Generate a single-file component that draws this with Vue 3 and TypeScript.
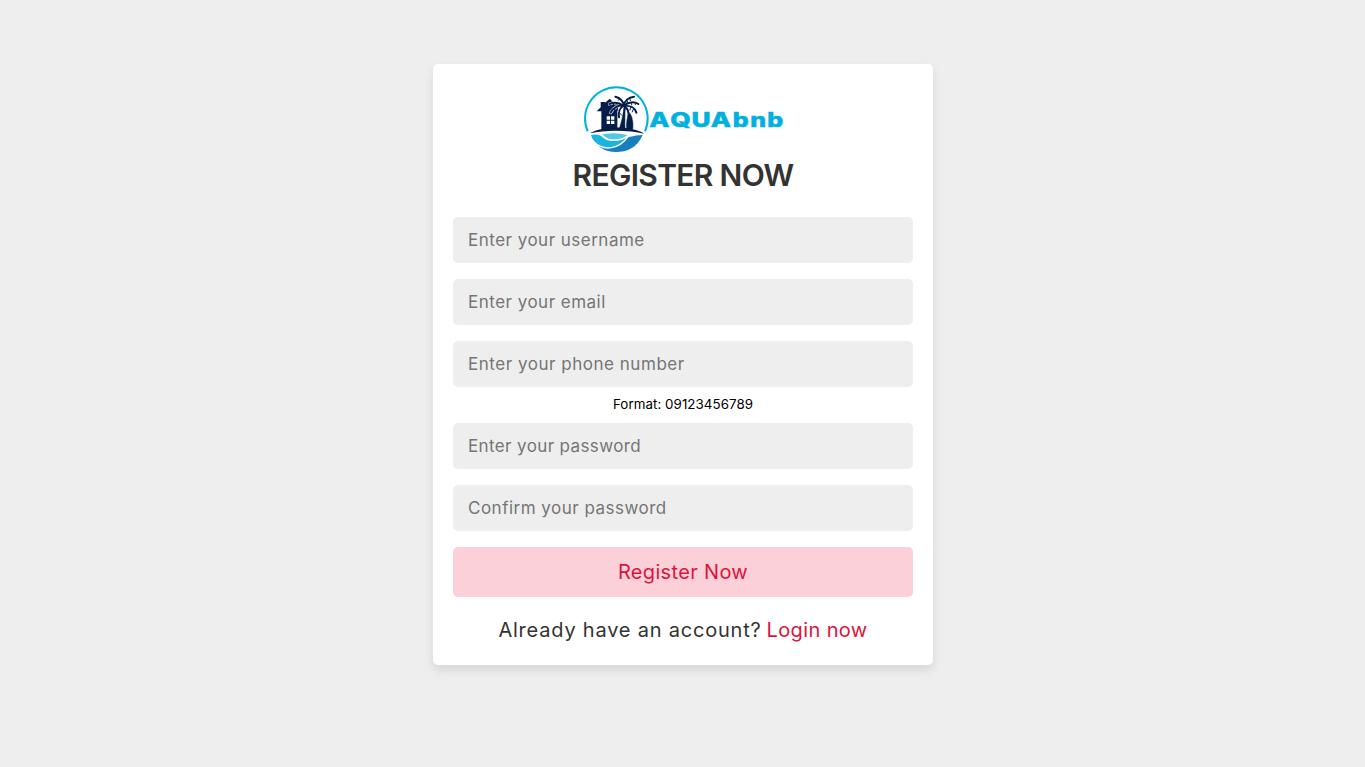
<script setup lang="ts">
import { reactive } from 'vue'

interface Field {
  key: string
  type: string
  placeholder: string
  hint?: string
}

const fields: Field[] = [
  { key: 'username', type: 'text', placeholder: 'Enter your username' },
  { key: 'email', type: 'email', placeholder: 'Enter your email' },
  { key: 'phone', type: 'tel', placeholder: 'Enter your phone number', hint: 'Format: 09123456789' },
  { key: 'password', type: 'password', placeholder: 'Enter your password' },
  { key: 'confirm', type: 'password', placeholder: 'Confirm your password' },
]

const values = reactive<Record<string, string>>({
  username: '',
  email: '',
  phone: '',
  password: '',
  confirm: '',
})
</script>

<template>
  <main class="page">
    <form class="card" @submit.prevent>
      <svg class="logo" viewBox="0 0 200 76" role="img" aria-label="AQUAbnb">
        <g transform="translate(-5.3 -4) scale(.33333)">
          <!-- ring -->
          <path d="M30 154A94 94 0 1 1 202 154" fill="none" stroke="#00b0e0" stroke-width="6" />
          <!-- house -->
          <path d="M57 94L69 82V66H82V68L96 56L119 78V149H71V94Z" fill="#061d49" />
          <path d="M87 109h10v10H87zM100 109h10v10h-10zM87 122h10v10H87zM100 122h10v10h-10z" fill="#fff" />
          <!-- palm and boards -->
          <g stroke="#fff" stroke-width="1.5" fill="#061d49">
            <path d="M137 78C136 105 129 127 122 151H144C142 120 144 98 144 78Z" />
            <path d="M156 97C146 109 143 132 146 150H166C169 132 166 109 156 97Z" />
          </g>
          <g fill="none" stroke="#fff" stroke-width="9" stroke-linecap="round">
            <path d="M137 77C124 75 106 82 99 98" />
            <path d="M137 77C122 66 108 66 95 72" />
          </g>
          <g fill="none" stroke="#061d49" stroke-width="6" stroke-linecap="round">
            <path d="M139 77C136 62 125 53 113 50" />
            <path d="M139 77C140 62 153 52 169 50" />
            <path d="M139 77C151 66 169 64 182 72" />
            <path d="M139 77C156 76 172 83 176 98" />
            <path d="M139 77C149 84 154 98 152 111" />
            <path d="M137 77C127 84 121 98 124 112" />
            <path d="M137 77C124 75 106 82 99 98" />
            <path d="M137 77C122 66 108 66 95 72" />
          </g>
          <g fill="none" stroke="#061d49" stroke-width="3">
            <path d="M150 61L148 69M157 56L158 63M162 67L162 76M172 67L173 75M160 80L156 91M168 86L163 97M120 82L120 92M110 86L110 98M119 68L117 76M108 69L107 76M126 56L121 62M143 83L138 104M125 98L133 107" />
          </g>
          <!-- shore and sea -->
          <path d="M36 160C76 138 155 136 200 161C155 150 84 149 36 160Z" fill="#061d49" />
          <path d="M40 166C58 159 71 159 91 168C135 188 153 165 195 165C178 205 145 216 116 216C80 216 54 200 40 166Z" fill="#167fbd" />
          <path d="M37 163C56 159 69 161 77 171C94 187 128 182 151 170C126 207 78 215 50 187C44 181 40 174 37 163Z" fill="#19b4df" stroke="#fff" stroke-width="4" />
          <path d="M65 162C97 155 129 157 153 164C134 184 94 184 80 171C76 166 72 164 65 162Z" fill="#50c9e9" stroke="#fff" stroke-width="4" />
        </g>
        <text class="wordmark" y="43.2" transform="scale(1.28 1)">
          <tspan x="51.8 68.2 84.7 99.8">AQUA</tspan><tspan class="lower" x="116.9 130.6 143.9">bnb</tspan>
        </text>
      </svg>
      <h1 class="title">REGISTER NOW</h1>
      <div v-for="field in fields" :key="field.key" class="field">
        <input
          v-model="values[field.key]"
          class="input"
          :class="field.key"
          :type="field.type"
          :placeholder="field.placeholder"
        />
        <small v-if="field.hint" class="hint">{{ field.hint }}</small>
      </div>
      <button class="submit" type="submit">Register Now</button>
      <p class="footer"><span class="question">Already have an account?</span><a class="login" href="#">Login now</a></p>
    </form>
  </main>
</template>

<style>
body {
  margin: 0;
  background: #eee;
}
</style>

<style scoped>
.page {
  box-sizing: border-box;
  min-height: 767px;
  padding-top: 64px;
  background: #eee;
  font-family: Inter, "Open Sans", sans-serif;
}
.card {
  box-sizing: border-box;
  display: flex;
  flex-direction: column;
  width: 500px;
  height: 601px;
  margin-left: 433px;
  padding: 20px;
  border-radius: 5px;
  background: #fff;
  box-shadow: 0 5px 10px rgba(0, 0, 0, .1);
}
.logo {
  flex: none;
  align-self: center;
  width: 200px;
  height: 76px;
  margin-bottom: -7px;
  overflow: visible;
}
.wordmark {
  fill: #00b0e0;
  stroke: #00b0e0;
  stroke-width: .5px;
  font-size: 20.5px;
  font-weight: 800;
}
.lower {
  font-size: 19.5px;
}
.title {
  height: 45px;
  margin: 0 0 19px;
  color: #333;
  font-size: 30px;
  font-weight: 600;
  letter-spacing: -.68px;
  line-height: 45px;
  text-align: center;
  white-space: nowrap;
}
.field {
  display: flex;
  flex-direction: column;
  margin-bottom: 16px;
}
.field:has(.hint) {
  margin-bottom: 6px;
}
.input {
  box-sizing: border-box;
  width: 100%;
  height: 46px;
  padding: 0 15px;
  border: 0;
  border-radius: 5px;
  outline: 0;
  background: #eee;
  color: #333;
  font-family: inherit;
  font-size: 17px;
  font-weight: 400;
  letter-spacing: .49px;
}
.input.phone {
  letter-spacing: .53px;
}
.input.password {
  letter-spacing: .38px;
}
.input::placeholder {
  color: #757575;
  opacity: 1;
}
.hint {
  height: 20px;
  margin-top: 7px;
  margin-bottom: 3px;
  color: #000;
  font-size: 13.33px;
  letter-spacing: .06px;
  line-height: 20px;
  text-align: center;
}
.submit {
  flex: none;
  height: 50px;
  padding: 0;
  border: 0;
  border-radius: 5px;
  background: #fbd0d9;
  color: crimson;
  font-family: inherit;
  font-size: 20px;
  letter-spacing: .33px;
}
.footer {
  display: flex;
  justify-content: center;
  gap: 5px;
  margin: 18px 0 0;
  color: #333;
  font-size: 20px;
  line-height: 30px;
  white-space: nowrap;
}
.question {
  letter-spacing: .79px;
}
.login {
  color: crimson;
  letter-spacing: .38px;
  text-decoration: none;
}
</style>
